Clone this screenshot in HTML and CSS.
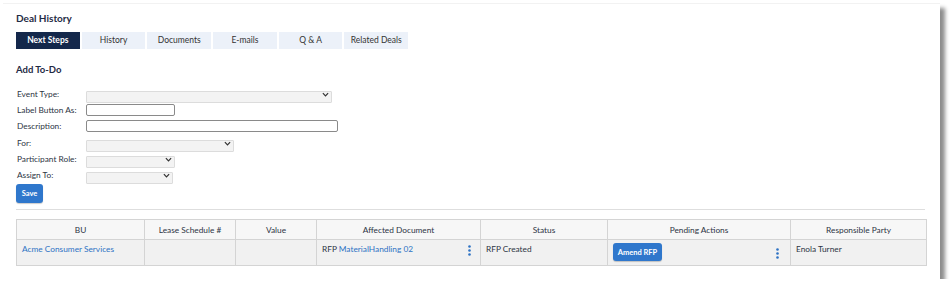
FILE: index.html
```html
<!DOCTYPE html>
<html>
<head>
<meta charset="utf-8">
<link rel="stylesheet" href="styles.css">
</head>
<body>
<div class="card">
  <h1 class="title">Deal History</h1>
  <nav class="tabs">
    <span class="tab active">Next Steps</span>
    <span class="tab">History</span>
    <span class="tab">Documents</span>
    <span class="tab">E-mails</span>
    <span class="tab">Q &amp; A</span>
    <span class="tab">Related Deals</span>
  </nav>
  <h2 class="subtitle">Add To-Do</h2>
  <form class="form">
    <label class="lbl">Event Type:</label>
    <div class="sel w246"><select></select><svg class="chev" viewBox="0 0 8 5" width="7" height="5"><path d="M1 1l3 3 3-3" fill="none" stroke="#333" stroke-width="1.4"/></svg></div>
    <label class="lbl">Label Button As:</label>
    <input class="inp w89" type="text">
    <label class="lbl">Description:</label>
    <input class="inp w252" type="text">
    <label class="lbl">For:</label>
    <div class="sel w148"><select></select><svg class="chev" viewBox="0 0 8 5" width="7" height="5"><path d="M1 1l3 3 3-3" fill="none" stroke="#333" stroke-width="1.4"/></svg></div>
    <label class="lbl">Participant Role:</label>
    <div class="sel w89"><select></select><svg class="chev" viewBox="0 0 8 5" width="7" height="5"><path d="M1 1l3 3 3-3" fill="none" stroke="#333" stroke-width="1.4"/></svg></div>
    <label class="lbl">Assign To:</label>
    <div class="sel w87"><select></select><svg class="chev" viewBox="0 0 8 5" width="7" height="5"><path d="M1 1l3 3 3-3" fill="none" stroke="#333" stroke-width="1.4"/></svg></div>
  </form>
  <button class="btn save" type="button">Save</button>
  <hr class="sep">
  <table class="grid">
    <colgroup>
      <col style="width:128px"><col style="width:91px"><col style="width:81px"><col style="width:164px"><col style="width:127px"><col style="width:183px"><col style="width:136px">
    </colgroup>
    <thead>
      <tr><th>BU</th><th>Lease Schedule #</th><th>Value</th><th>Affected Document</th><th>Status</th><th>Pending Actions</th><th>Responsible Party</th></tr>
    </thead>
    <tbody>
      <tr>
        <td><a class="link">Acme Consumer Services</a></td>
        <td></td>
        <td></td>
        <td><div class="cell-flex"><span>RFP <a class="link">MaterialHandling 02</a></span><svg class="kebab" viewBox="0 0 3 11" width="3" height="11"><circle cx="1.5" cy="1.5" r="1.3"/><circle cx="1.5" cy="5.5" r="1.3"/><circle cx="1.5" cy="9.5" r="1.3"/></svg></div></td>
        <td>RFP Created</td>
        <td><div class="cell-flex"><button class="btn amend" type="button">Amend RFP</button><svg class="kebab k2" viewBox="0 0 3 11" width="3" height="11"><circle cx="1.5" cy="1.5" r="1.3"/><circle cx="1.5" cy="5.5" r="1.3"/><circle cx="1.5" cy="9.5" r="1.3"/></svg></div></td>
        <td>Enola Turner</td>
      </tr>
    </tbody>
  </table>
</div>
</body>
</html>
```
FILE: styles.css
```css
html, body { margin: 0; padding: 0; background: #fff; }
body { font-family: Lato, "Open Sans", "Liberation Sans", sans-serif; color: #2d3544; }
.card {
  margin: 3px 0 0 3px;
  width: 937px;
  height: 276px;
  box-sizing: border-box;
  padding: 8px 15px 0 13px;
  background: #fff;
  border-top: 1px solid #f2f2f2;
  box-shadow: 5px 5px 4px rgba(0,0,0,0.45);
}
.title { margin: 0; font-size: 10px; line-height: 12px; font-weight: 700; color: #1f2b45; }
.tabs { display: flex; gap: 2px; margin-top: 8px; }
.tab {
  width: 63.7px; height: 17px; line-height: 17px; text-align: center;
  font-size: 8.5px; background: #ecf1f9; color: #333;
}
.tab.active { background: #14284b; color: #fff; font-weight: 700; }
.subtitle { margin: 15px 0 0; font-size: 9.5px; line-height: 12px; font-weight: 700; color: #1f2b45; }
.form {
  margin-top: 10px;
  display: grid;
  grid-template-columns: 70px auto;
  grid-auto-rows: 16.2px;
  align-items: center;
  justify-items: start;
}
.lbl { font-size: 8.3px; color: #2d3544; padding-left: 1px; }
.sel { position: relative; height: 12px; }
.sel select {
  appearance: none; -webkit-appearance: none;
  width: 100%; height: 12px; margin: 0; padding: 0;
  background: #f3f3f3; border: 1px solid #dcdcdc; border-radius: 1px; box-sizing: border-box;
}
.chev { position: absolute; right: 3px; top: 4px; }
.inp {
  height: 12px; margin: 0; padding: 0; box-sizing: border-box;
  border: 1px solid #8a8a8a; border-radius: 2px; background: #fff;
}
.w246 { width: 246px; }
.w252 { width: 252px; }
.w148 { width: 148px; }
.w89 { width: 89px; }
.w87 { width: 87px; }
.btn {
  border: 0; border-radius: 3px; background: #2f77cc; color: #fff;
  font-family: inherit; font-weight: 700; padding: 0; cursor: pointer;
  box-shadow: 0 1px 1px rgba(0,0,0,0.2);
}
.save { display: block; margin-top: 1px; width: 27px; height: 19px; font-size: 7.5px; }
.sep { margin: 6px 0 0; border: 0; border-top: 1px solid #dedede; height: 0; }
.grid {
  margin-top: 9px; width: 910px; border-collapse: collapse; table-layout: fixed;
  font-size: 8.3px;
}
.grid th, .grid td { border: 1px solid #d4d4d4; }
.grid th { height: 19px; background: #f7f7f7; font-weight: 400; color: #2d3544; padding: 0; }
.grid td { height: 21px; background: #f1f1f1; vertical-align: top; padding: 4px 5px 0; color: #2d3544; }
.link { color: #2d72c4; }
.cell-flex { display: flex; justify-content: space-between; align-items: flex-start; }
.kebab { fill: #2d72c4; margin-top: 1px; margin-right: 4px; }
.k2 { margin-top: 4px; margin-right: 6px; }
.amend { width: 49px; height: 18px; font-size: 7.5px; margin-top: -1px; }
```
